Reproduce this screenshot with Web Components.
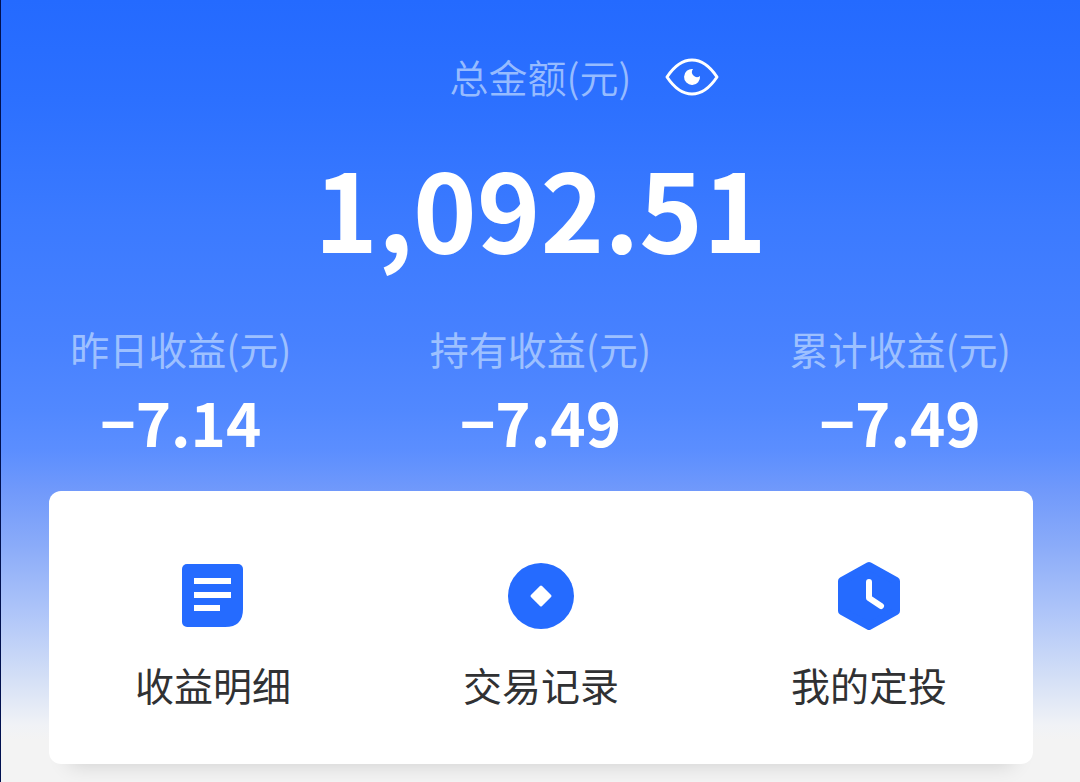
<!DOCTYPE html>
<html lang="zh-CN">
<head>
<meta charset="utf-8">
<meta name="viewport" content="width=device-width, initial-scale=1">
<title>总金额</title>
<style>
  html, body { margin: 0; min-height: 100%; background: #f3f3f3; }
  body { font-family: "Noto Sans CJK SC", sans-serif; }
</style>
</head>
<body>
<asset-page>
  <total-amount slot="total" amount="1,092.51">总金额(元)</total-amount>
  <stat-item slot="stats" value="−7.14">昨日收益(元)</stat-item>
  <stat-item slot="stats" value="−7.49">持有收益(元)</stat-item>
  <stat-item slot="stats" value="−7.49">累计收益(元)</stat-item>
  <action-link slot="actions" href="#details">
    <svg slot="icon" width="72" height="72" viewBox="0 0 72 72" aria-hidden="true">
      <path fill="#256bff" d="M10 4H61a5 5 0 0 1 5 5V49Q66 67 48 67H10a5 5 0 0 1-5-5V9a5 5 0 0 1 5-5Z"/>
      <path fill="none" stroke="#fff" stroke-width="6" d="M17 21H54M17 35H54M17 48H43"/>
    </svg>收益明细</action-link>
  <action-link slot="actions" href="#records">
    <svg slot="icon" width="72" height="72" viewBox="0 0 72 72" aria-hidden="true">
      <circle cx="36" cy="36" r="33" fill="#256bff"/>
      <path fill="#fff" stroke="#fff" stroke-width="3" stroke-linejoin="round" d="M36 27L45 36L36 45L27 36Z"/>
    </svg>交易记录</action-link>
  <action-link slot="actions" href="#plan">
    <svg slot="icon" width="72" height="72" viewBox="0 0 72 72" aria-hidden="true">
      <path fill="#256bff" stroke="#256bff" stroke-width="8" stroke-linejoin="round" d="M36 6L63 21V51L36 66L9 51V21Z"/>
      <path fill="none" stroke="#fff" stroke-width="6" stroke-linecap="round" stroke-linejoin="round" d="M36 22V38L48 46"/>
    </svg>我的定投</action-link>
</asset-page>
<script>
const define = (name, markup, setup) => {
  const template = document.createElement('template');
  template.innerHTML = markup;
  customElements.define(name, class extends HTMLElement {
    constructor() {
      super();
      this.attachShadow({ mode: 'open' }).append(template.content.cloneNode(true));
    }
    connectedCallback() {
      if (setup) setup(this, this.shadowRoot);
    }
  });
};

define('asset-page', `
  <style>
    :host {
      display: block;
      box-sizing: border-box;
      min-height: 100vh;
      padding: 48px 0 18px;
      border-left: 1px solid #001050;
      background: #f3f3f3 linear-gradient(#246aff 0, #2c70ff 100px, #3b7aff 220px, #4781ff 340px, #5188ff 410px, #5b8eff 450px, #7099fb 490px, #8aabf9 545px, #adc4f9 610px, #d2def6 675px, #f0f2f6 725px, #f3f3f3 740px) no-repeat;
    }
    .stats { display: grid; grid-template-columns: repeat(3, 1fr); margin-top: 56px; }
    .card {
      display: grid;
      grid-template-columns: repeat(3, 1fr);
      margin: 38px 47px 0 48px;
      padding: 69px 0 52px;
      border-radius: 12px;
      background: #fff;
      box-shadow: 0 20px 20px -20px rgba(0, 0, 0, .16);
    }
  </style>
  <main>
    <slot name="total"></slot>
    <section class="stats"><slot name="stats"></slot></section>
    <nav class="card"><slot name="actions"></slot></nav>
  </main>`);

define('total-amount', `
  <style>
    :host { display: block; text-align: center; }
    .head { display: grid; grid-template-columns: 1fr auto 1fr; align-items: center; }
    .label { grid-column: 2; font-size: 39px; line-height: 56px; color: #96bbff; font-weight: 350; }
    button { justify-self: start; margin: 0 0 0 32px; padding: 0; border: 0; background: none; height: 56px; }
    svg { display: block; }
    .amount { margin-top: 40px; font: bold 108px/124px "Liberation Sans Narrow", "Noto Sans CJK SC", sans-serif; color: #fff; }
  </style>
  <div class="head">
    <span class="label"><slot></slot></span>
    <button type="button" aria-label="隐藏金额">
      <svg width="56" height="56" viewBox="0 0 56 56" aria-hidden="true">
        <path fill="none" stroke="#fff" stroke-width="3" stroke-linejoin="round" d="M4 29C10 20 18 12 29 12S48 20 54 29C48 38 40 46 29 46S10 38 4 29Z"/>
        <path fill="#fff" d="M30 21A8 8 0 1 0 37 28A5 5 0 0 1 30 21Z"/>
      </svg>
    </button>
  </div>
  <div class="amount"></div>`,
  (host, root) => { root.querySelector('.amount').textContent = host.getAttribute('amount'); });

define('stat-item', `
  <style>
    :host { display: block; text-align: center; white-space: nowrap; }
    .label { font-size: 39px; line-height: 48px; color: #9dc0ff; }
    .value { margin-top: 16px; font: bold 60px/65px "Liberation Sans Narrow", "Noto Sans CJK SC", sans-serif; color: #fff; }
  </style>
  <div class="label"><slot></slot></div>
  <div class="value"></div>`,
  (host, root) => { root.querySelector('.value').textContent = host.getAttribute('value'); });

define('action-link', `
  <style>
    :host { display: block; }
    a { display: flex; flex-direction: column; align-items: center; gap: 24px; color: #303133; text-decoration: none; font-size: 39px; line-height: 56px; white-space: nowrap; }
    ::slotted(svg) { display: block; }
  </style>
  <a><slot name="icon"></slot><span><slot></slot></span></a>`,
  (host, root) => { root.querySelector('a').href = host.getAttribute('href'); });
</script>
</body>
</html>
